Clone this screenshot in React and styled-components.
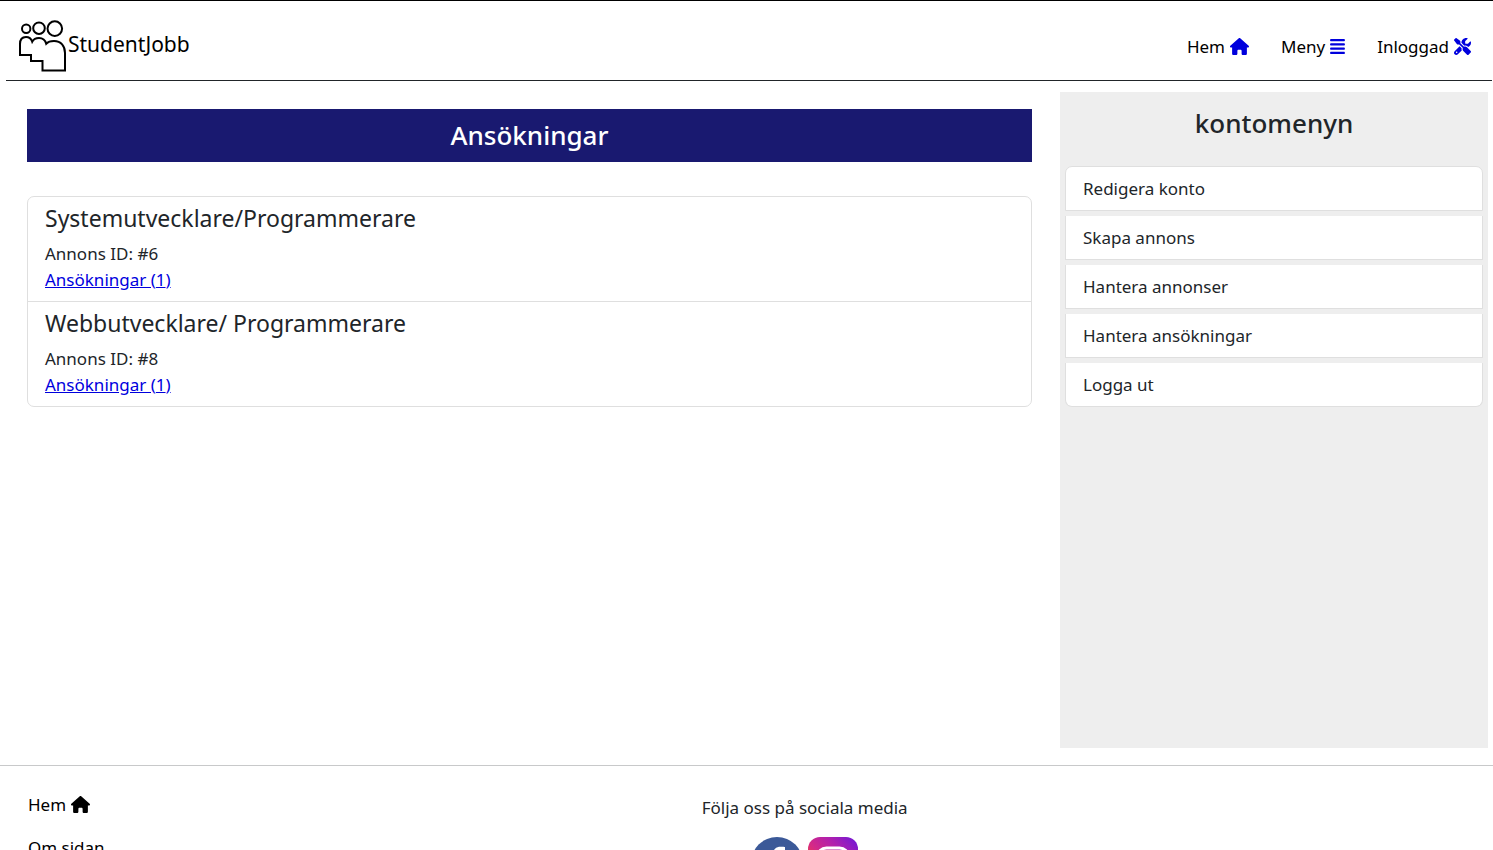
import React from "react";
import styled, { createGlobalStyle } from "styled-components";
import { FaHouse, FaAlignJustify, FaScrewdriverWrench } from "react-icons/fa6";

const GlobalStyle = createGlobalStyle`
  *, *::before, *::after { box-sizing: border-box; }
  body {
    margin: 0;
    background: #fff;
    color: #212529;
    font-family: "Noto Sans", "Liberation Sans", sans-serif;
    font-size: 17px;
    line-height: 26px;
  }
  h1, h2, p, ul { margin: 0; padding: 0; font-weight: 500; }
  p { font-weight: 400; }
  ul { list-style: none; font-weight: 400; }
`;

const TopBar = styled.header`
  border-top: 1px solid #000;
  padding: 0 1px 0 6px;
`;

const TopBarInner = styled.div`
  display: flex;
  justify-content: space-between;
  height: 80px;
  padding: 18px 21px 0 12px;
  border-bottom: 1px solid #212529;
`;

const Brand = styled.a`
  display: flex;
  align-items: flex-start;
  color: #000;
  font-size: 21px;
  line-height: 50px;
  text-decoration: none;
`;

const LogoMark = styled.svg`
  width: 50px;
  height: 54px;
  fill: none;
  stroke: #000;
  stroke-width: 2;
`;

const Nav = styled.nav`
  display: flex;
  gap: 32px;
  padding-top: 15px;
`;

const IconLink = styled.a`
  display: flex;
  gap: 5px;
  height: 26px;
  color: #000;
  text-decoration: none;

  svg {
    flex: none;
    height: 17px;
    width: ${(p) => p.$iconWidth || 17}px;
    margin-top: 4px;
    color: ${(p) => p.$iconColor || "#000"};
  }
`;

const Content = styled.div`
  display: grid;
  grid-template-columns: minmax(0, 1fr) 428px;
  gap: 28px;
  min-height: 656px;
  margin: 11px 5px 17px 27px;
`;

const Main = styled.main`
  padding-top: 17px;
`;

const Banner = styled.h1`
  margin-bottom: 34px;
  padding: 11px;
  background: #191970;
  color: #fff;
  font-size: 26px;
  line-height: 31px;
  text-align: center;
`;

const JobList = styled.ul`
  border: 1px solid #dfdfdf;
  border-radius: 7px;
`;

const Job = styled.li`
  padding: 8px 17px;

  & + & { border-top: 1px solid #dfdfdf; }
`;

const JobTitle = styled.h2`
  margin-bottom: 9px;
  font-size: 23px;
  font-weight: 420;
  line-height: 27px;
`;

const JobLink = styled.a`
  color: #0000dd;
`;

const Sidebar = styled.aside`
  padding: 16px 5px;
  background: #eee;
`;

const SidebarTitle = styled.h2`
  margin-bottom: 27px;
  font-size: 26px;
  line-height: 31px;
  text-align: center;
`;

const Menu = styled.ul`
  display: grid;
  gap: 5px;
`;

const MenuItem = styled.li`
  padding: 9px 17px 8px;
  border: solid #dfdfdf;
  border-width: 0 1px 1px;
  background: #fff;

  &:first-child {
    border-top-width: 1px;
    border-radius: 7px 7px 0 0;
  }
  &:last-child { border-radius: 0 0 7px 7px; }
`;

const MenuLink = styled.a`
  display: block;
  color: inherit;
  text-decoration: none;
`;

const Footer = styled.footer`
  display: grid;
  grid-template-columns: 47% 1fr;
  padding: 26px 0 32px;
  border-top: 1px solid #c8c9ca;
`;

const FooterNav = styled.nav`
  display: grid;
  align-content: start;
  gap: 17px;
  padding-left: 28px;
`;

const Social = styled.section`
  justify-self: start;
  padding-top: 3px;
  text-align: center;
`;

const SocialIcons = styled.div`
  display: flex;
  justify-content: center;
  gap: 4px;
  margin-top: 16px;

  svg { display: block; width: 52px; height: 52px; }
`;

const linkBlue = "#0000dd";

const jobs = [
  { id: 6, title: "Systemutvecklare/Programmerare", count: 1 },
  { id: 8, title: "Webbutvecklare/ Programmerare", count: 1 },
];

const menu = [
  "Redigera konto",
  "Skapa annons",
  "Hantera annonser",
  "Hantera ansökningar",
  "Logga ut",
];

function Logo() {
  return (
    <LogoMark viewBox="0 0 50 54" aria-hidden="true">
      <circle cx="8.2" cy="9.7" r="4.2" />
      <circle cx="21" cy="9.2" r="5.8" />
      <circle cx="36.8" cy="9.6" r="7.3" />
      <path d="M2 36V25C2 20.5 4.5 18 8 18C11 18 13.2 19.8 14.2 22.8C15.5 20.3 18 19 21 19C24.5 19 27.2 21 28.2 24.8C30 22.8 33 22 36 22C43 22 47 27 47 34V51.5H24.5V42H13V36Z" />
    </LogoMark>
  );
}

function FacebookLogo() {
  return (
    <svg viewBox="0 0 52 52" role="img" aria-label="Facebook">
      <circle cx="26" cy="26" r="26" fill="#3b5998" />
      <path
        fill="#fff"
        d="M22 43V28h-5v-6h5v-4.5c0-5.2 3-7.8 7.7-7.8 2.2 0 3.8.2 4.3.2v5.4h-3c-2.4 0-2.9 1.1-2.9 2.8V22h5.7l-.8 6h-4.9v15z"
      />
    </svg>
  );
}

function InstagramLogo() {
  return (
    <svg viewBox="0 0 52 52" role="img" aria-label="Instagram">
      <defs>
        <linearGradient id="ig" x1="0" y1="1" x2="1" y2="0">
          <stop offset="0" stopColor="#fdc03b" />
          <stop offset="0.25" stopColor="#f0472f" />
          <stop offset="0.45" stopColor="#d62a85" />
          <stop offset="0.7" stopColor="#b01fae" />
          <stop offset="1" stopColor="#6a17da" />
        </linearGradient>
      </defs>
      <rect x="1" width="50" height="51" rx="12" fill="url(#ig)" />
      <rect x="10.5" y="11" width="31" height="31" rx="9" fill="none" stroke="#fff" strokeWidth="3" />
      <circle cx="26" cy="26" r="7.5" fill="none" stroke="#fff" strokeWidth="3" />
      <circle cx="35" cy="17" r="2" fill="#fff" />
    </svg>
  );
}

export default function App() {
  return (
    <>
      <GlobalStyle />
      <TopBar>
        <TopBarInner>
          <Brand href="#">
            <Logo />
            StudentJobb
          </Brand>
          <Nav>
            <IconLink href="#" $iconColor={linkBlue} $iconWidth={19}>Hem <FaHouse /></IconLink>
            <IconLink href="#" $iconColor={linkBlue} $iconWidth={15}>Meny <FaAlignJustify /></IconLink>
            <IconLink href="#" $iconColor={linkBlue}>Inloggad <FaScrewdriverWrench /></IconLink>
          </Nav>
        </TopBarInner>
      </TopBar>

      <Content>
        <Main>
          <Banner>Ansökningar</Banner>
          <JobList>
            {jobs.map((job) => (
              <Job key={job.id}>
                <JobTitle>{job.title}</JobTitle>
                <p>Annons ID: #{job.id}</p>
                <JobLink href="#">Ansökningar ({job.count})</JobLink>
              </Job>
            ))}
          </JobList>
        </Main>
        <Sidebar>
          <SidebarTitle>kontomenyn</SidebarTitle>
          <Menu>
            {menu.map((label) => (
              <MenuItem key={label}>
                <MenuLink href="#">{label}</MenuLink>
              </MenuItem>
            ))}
          </Menu>
        </Sidebar>
      </Content>

      <Footer>
        <FooterNav>
          <IconLink href="#" $iconWidth={19}>Hem <FaHouse /></IconLink>
          <IconLink href="#">Om sidan</IconLink>
        </FooterNav>
        <Social>
          <p>Följa oss på sociala media</p>
          <SocialIcons>
            <FacebookLogo />
            <InstagramLogo />
          </SocialIcons>
        </Social>
      </Footer>
    </>
  );
}
